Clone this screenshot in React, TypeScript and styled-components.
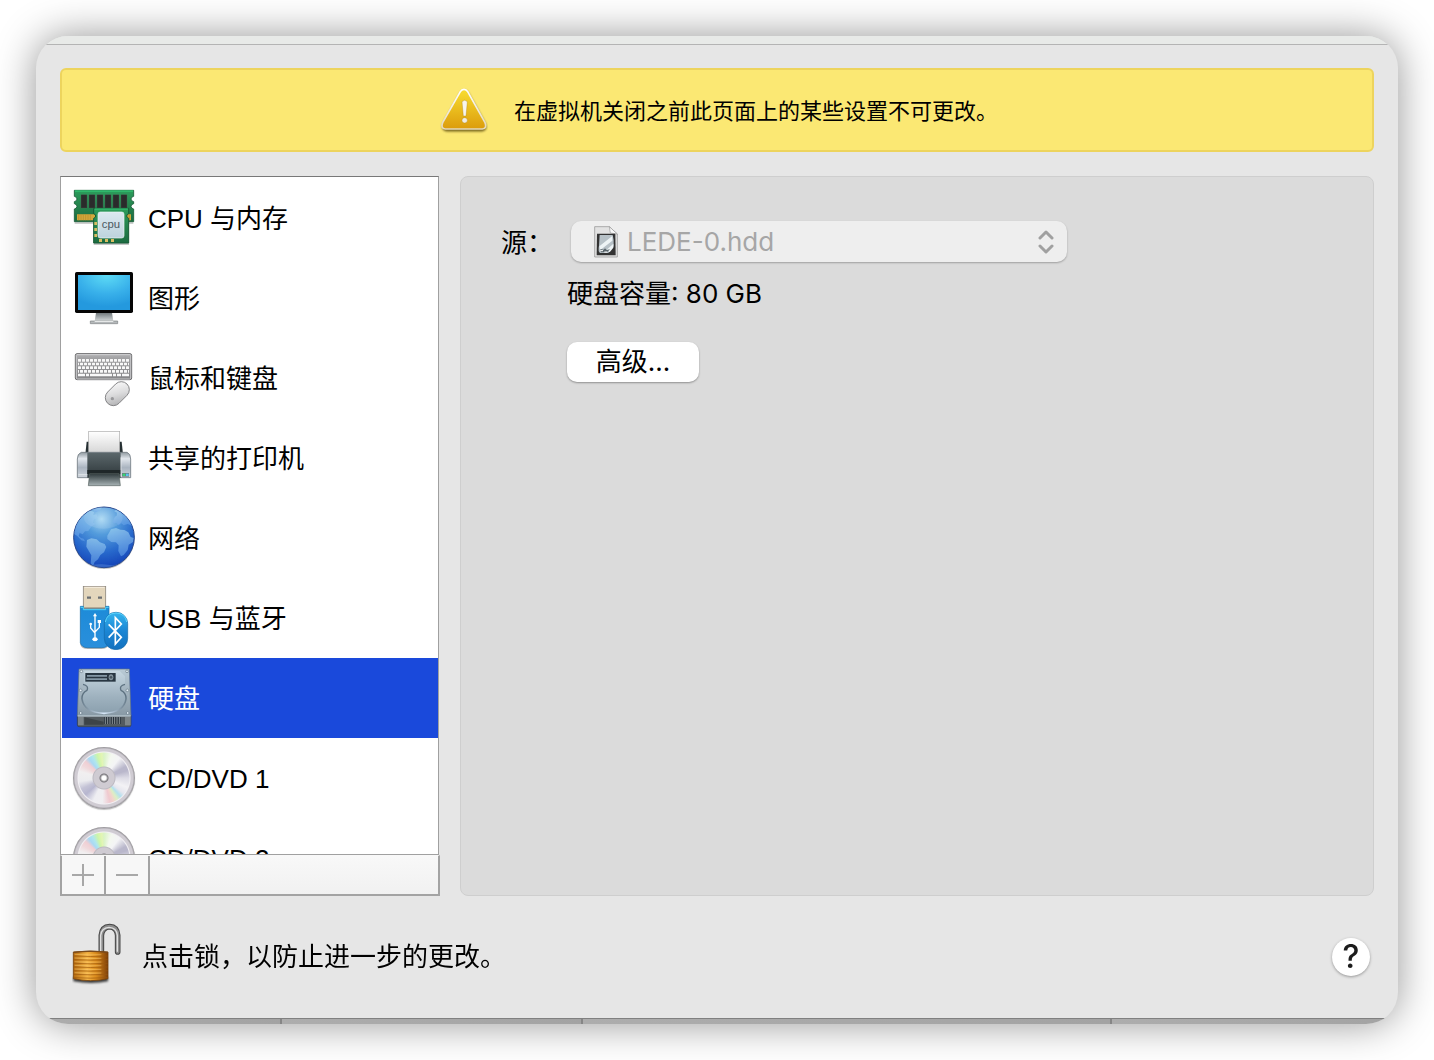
import React, { useState } from 'react';
import styled, { createGlobalStyle } from 'styled-components';

const sans = '"Liberation Sans", "Noto Sans CJK SC", sans-serif';
const ui = 'Inter, "Noto Sans CJK SC", sans-serif';

const GlobalStyle = createGlobalStyle`
  *, *::before, *::after { box-sizing: border-box; }
  body { margin: 0; background: #fff; color: #000; font-family: ${ui}; font-size: 26px; }
  button, select { font: inherit; color: inherit; }
`;

const Desktop = styled.div`
  min-height: 100vh;
  padding: 36px;
  display: flex;
`;

const Window = styled.main`
  flex: 1;
  min-width: 0;
  display: flex;
  flex-direction: column;
  overflow: hidden;
  border-radius: 32px;
  background: #e6e6e6;
  box-shadow: 0 0 40px rgba(0, 0, 0, 0.42);
`;

const TitleEdge = styled.div`
  height: 9px;
  background: #e8eae8;
  border-bottom: 1px solid #b4b4b4;
`;

const Content = styled.div`
  flex: 1;
  display: flex;
  flex-direction: column;
  padding: 23px 24px 0;
`;

const Banner = styled.div`
  display: flex;
  align-items: center;
  justify-content: center;
  gap: 26px;
  height: 84px;
  padding-left: 4px;
  border: 2px solid #edd45d;
  border-radius: 6px;
  background: #fbe873;
  font-size: 22px;
  line-height: 32px;
`;

const Caption = styled.span`
  padding-top: 2px;
`;

const Columns = styled.div`
  display: flex;
  gap: 20px;
  margin-top: 24px;
`;

const Sidebar = styled.aside`
  flex: none;
  width: 380px;
`;

const DeviceList = styled.ul`
  list-style: none;
  height: 679px;
  margin: 0 1px 0 0;
  padding: 1px 0 0 1px;
  overflow-y: auto;
  scrollbar-width: none;
  border: 1px solid #a0a0a0;
  border-top-color: #787878;
  background: #fff;
`;

const DeviceButton = styled.button<{ $active: boolean }>`
  display: flex;
  align-items: center;
  gap: 12px;
  width: 100%;
  height: 80px;
  padding: 0 10px;
  border: 0;
  background: ${(p) => (p.$active ? '#1a49db' : 'transparent')};
  color: ${(p) => (p.$active ? '#fff' : '#000')};
  font-family: ${sans};
  font-size: 26px;
  line-height: 32px;
  text-align: left;
`;

const Toolbar = styled.div`
  display: flex;
  height: 41px;
  border: 2px solid #a3a3a3;
  border-top: 1px solid #f8f8f8;
  background: linear-gradient(#f8f8f8, #f1f1f1);
`;

const ToolButton = styled.button`
  display: grid;
  place-items: center;
  width: 44px;
  padding: 0;
  border: 0;
  border-right: 2px solid #a3a3a3;
  background: #f7f7f7;
`;

const Panel = styled.section`
  flex: 1;
  min-width: 0;
  padding: 44px 40px;
  border: 1px solid #cecece;
  border-radius: 8px;
  background: #dbdbdb;
`;

const Form = styled.div`
  display: grid;
  grid-template-columns: auto minmax(0, 1fr);
  column-gap: 14px;
  row-gap: 16px;
  line-height: 32px;
`;

const FieldLabel = styled.label`
  align-self: center;
  padding-top: 2px;
`;

const Picker = styled.div`
  position: relative;
  max-width: 496px;
  margin-left: 4px;
`;

const PickerSelect = styled.select`
  appearance: none;
  display: block;
  width: 100%;
  height: 41px;
  padding: 0 56px;
  border: 0;
  border-radius: 10px;
  background: #eee;
  box-shadow: 0 1px 2px rgba(0, 0, 0, 0.28);
  font-size: 26px;
  line-height: 32px;
  &:disabled { color: #a6a6a6; opacity: 1; }
`;

const PickerIcon = styled.span<{ $side: 'left' | 'right' }>`
  position: absolute;
  top: 0;
  bottom: 0;
  ${(p) => p.$side}: ${(p) => (p.$side === 'left' ? 23 : 13)}px;
  display: flex;
  align-items: center;
  pointer-events: none;
`;

const FormBody = styled.div`
  grid-column: 2;
`;

const PushButton = styled.button`
  height: 40px;
  min-width: 132px;
  margin-top: 16px;
  padding: 0 28px;
  border: 0;
  border-radius: 10px;
  background: #fff;
  box-shadow: 0 1px 2px rgba(0, 0, 0, 0.35);
  line-height: 32px;
`;

const Footer = styled.footer`
  flex: 1;
  display: flex;
  align-items: center;
  gap: 20px;
  min-height: 122px;
  padding: 0 4px 0 12px;
`;

const LockButton = styled.button`
  display: flex;
  padding: 0 0 4px;
  border: 0;
  background: none;
`;

const LockText = styled.span`
  flex: 1;
  line-height: 32px;
`;

const HelpButton = styled.button`
  width: 38px;
  height: 38px;
  padding: 0;
  border: 0;
  border-radius: 50%;
  background: #fff;
  box-shadow: 0 1px 3px rgba(0, 0, 0, 0.35);
  color: #1c1c1c;
  font-size: 32px;
  font-weight: 500;
  line-height: 38px;
`;

const BottomEdge = styled.div`
  display: flex;
  height: 6px;
  border-top: 1px solid #808080;
  background: #a6a6a6;
`;

const EdgeSegment = styled.div<{ $grow: number }>`
  flex: ${(p) => p.$grow} 1 0;
  border-right: 2px solid #868686;
  background: linear-gradient(90deg, #adadad, #a3a3a3);
  &:last-child { border-right: 0; }
`;

const Disc = styled.span`
  flex: none;
  width: 62px;
  height: 62px;
  margin: 1px;
  border-radius: 50%;
  box-shadow: 0 1px 1px rgba(0, 0, 0, 0.25);
  background:
    radial-gradient(circle, #fff 0 2px, #77757a 4px, #cfcbd2 5px, #cfcbd2 10px, #bdbac2 11px, transparent 12px, transparent 25px, #f2f0f4 26px, #d0ccd3 27px, #d0ccd3 29px, #8e8c90 31px),
    conic-gradient(#d9f3c4, #f4f8f0 18deg, #f4f4f6 38deg, #b9b7cb 62deg, #b9b7cb 72deg, #dddce6 90deg, #f3f2f5 112deg, #e6e6ee 128deg, #b4e0ee 138deg, #dcefc4 148deg, #f3d3cd 158deg, #efc9cf 166deg, #f0eff2 184deg, #eeeef2 205deg, #b7b6cf 228deg, #c4c3d6 244deg, #ececef 262deg, #f1eff0 285deg, #f0d9dc 300deg, #f0cfd4 312deg, #a9d9f4 322deg, #b0e6ee 332deg, #cdf5a9 344deg, #e3f5b4 354deg, #d9f3c4);
`;

const DeviceSvg = styled.svg`
  flex: none;
  width: 64px;
  height: 64px;
`;

const CpuIcon = () => (
  <DeviceSvg viewBox="36 33 192 192" aria-hidden="true">
    <defs>
      <linearGradient id="board" x1="0" y1="0" x2="0" y2="1"><stop offset="0" stopColor="#2c9c5b" /><stop offset="1" stopColor="#1c6b40" /></linearGradient>
      <linearGradient id="chip" x1="0" y1="0" x2="0" y2="1"><stop offset="0" stopColor="#dce9f0" /><stop offset="1" stopColor="#bdd3dd" /></linearGradient>
    </defs>
    <path d="M44 142h176v4H44z" fill="#000" opacity=".25" />
    <path d="M43 46h178v18q-8 2-8 8t8 8v6q-8 2-8 8t8 8v38H43v-38q8-2 8-8t-8-8v-6q8-2 8-8t-8-8z" fill="url(#board)" stroke="#175b36" strokeWidth="2.5" />
    <path d="M45 48h174" stroke="#35d47c" strokeWidth="3" />
    <g fill="#2a2b2b" stroke="#555c58" strokeWidth="1">
      {[63, 87, 111, 135, 159, 183].map((x) => <rect key={x} x={x} y="59" width="18" height="40" rx="1" />)}
    </g>
    <path d="M51 118h162v18H51z" fill="#d2a83c" />
    <path d="M56 118v18m7-18v18m7-18v18m7-18v18m7-18v18m7-18v18m110-18v18m7-18v18" stroke="#b78a28" strokeWidth="2" />
    <path d="M101 205h106v4H101z" fill="#000" opacity=".3" />
    <path d="M101 100h105v16q-6 2-6 7t6 7v74H101v-74q6-2 6-7t-6-7z" fill="url(#board)" stroke="#175b36" strokeWidth="3" />
    <path d="M104 102h100" stroke="#35c877" strokeWidth="3" />
    <rect x="114" y="111" width="78" height="78" rx="7" fill="url(#chip)" stroke="#f0f6f8" strokeWidth="2" />
    <g fill="#d9bd62"><path d="M103 141h8v9h-8zM103 159h8v9h-8zM103 177h8v9h-8zM117 192h9v9h-9zM135 192h9v9h-9zM153 192h9v9h-9z" /></g>
    <text x="153" y="159" textAnchor="middle" fontFamily="Liberation Sans, sans-serif" fontSize="34" fill="#4b5961">cpu</text>
  </DeviceSvg>
);

const DisplayIcon = () => (
  <DeviceSvg viewBox="36 273 192 192" aria-hidden="true">
    <defs>
      <radialGradient id="screen" cx=".55" cy="0" r=".9"><stop offset="0" stopColor="#5edcf6" /><stop offset=".6" stopColor="#38b0ea" /><stop offset="1" stopColor="#2499de" /></radialGradient>
      <linearGradient id="stand" x1="0" y1="0" x2="0" y2="1"><stop offset="0" stopColor="#6f7679" /><stop offset=".5" stopColor="#a3aaad" /><stop offset="1" stopColor="#d8dbdc" /></linearGradient>
    </defs>
    <path d="M108 413h48l4 26h-56z" fill="url(#stand)" />
    <path d="M91 438h82v8H91z" fill="#b5b9bb" stroke="#7a7e80" strokeWidth="2" />
    <path d="M104 439h56" stroke="#f4f6f6" strokeWidth="3" />
    <rect x="45" y="291" width="174" height="123" rx="5" fill="#050505" />
    <rect x="54" y="300" width="156" height="105" fill="url(#screen)" />
  </DeviceSvg>
);

const KeyboardIcon = () => (
  <DeviceSvg viewBox="36 18 192 192" aria-hidden="true">
    <defs>
      <linearGradient id="kbd" x1="0" y1="0" x2="0" y2="1"><stop offset="0" stopColor="#b4b4b6" /><stop offset=".2" stopColor="#a0a0a2" /><stop offset="1" stopColor="#868688" /></linearGradient>
      <linearGradient id="mouse" x1="0" y1="0" x2="1" y2="1"><stop offset="0" stopColor="#fdfdfd" /><stop offset=".5" stopColor="#dcdcdd" /><stop offset="1" stopColor="#a9a9ab" /></linearGradient>
    </defs>
    <rect x="46" y="41" width="169" height="78" rx="5" fill="url(#kbd)" stroke="#6a6a6c" strokeWidth="3" />
    <path d="M50 44h161" stroke="#e9e9ea" strokeWidth="2" />
    <path d="M49 46v68q0 3 3 3h157q3 0 3-3V46" fill="none" stroke="#c8c8ca" strokeWidth="3" />
    <g fill="#f8f8f8">
      {[0, 1, 2, 3].map((r) => Array.from({ length: r % 2 ? 12 : 13 }, (_, c) => (
        <rect key={`${r}-${c}`} x={54 + (r % 2) * 6 + c * 12} y={57 + r * 11} width="9" height="8" rx="1" />
      )))}
      <path d="M54 68h3v8h-3zM204 68h3v8h-3zM54 90h3v8h-3zM204 90h3v8h-3z" />
      <rect x="54" y="101" width="21" height="8" rx="1" /><rect x="78" y="101" width="9" height="8" rx="1" />
      <rect x="90" y="101" width="66" height="8" rx="1" /><rect x="159" y="101" width="9" height="8" rx="1" />
      <rect x="171" y="101" width="12" height="8" rx="1" /><rect x="186" y="101" width="21" height="8" rx="1" />
    </g>
    <rect x="148" y="120" width="48" height="82" rx="24" transform="rotate(45 172 161)" fill="url(#mouse)" stroke="#767678" strokeWidth="2.5" />
    <circle cx="157" cy="176" r="5" fill="#98989a" />
  </DeviceSvg>
);

const PrinterIcon = () => (
  <DeviceSvg viewBox="36 258 192 192" aria-hidden="true">
    <defs>
      <linearGradient id="paper" x1="0" y1="0" x2="0" y2="1"><stop offset="0" stopColor="#fff" /><stop offset="1" stopColor="#d4d4d4" /></linearGradient>
      <linearGradient id="shell" x1="0" y1="0" x2="0" y2="1"><stop offset="0" stopColor="#8f999f" /><stop offset=".25" stopColor="#e1e6ec" /><stop offset=".6" stopColor="#aab4c0" /><stop offset="1" stopColor="#cfd5dc" /></linearGradient>
      <linearGradient id="front" x1="0" y1="0" x2="0" y2="1"><stop offset="0" stopColor="#5b676b" /><stop offset="1" stopColor="#2d3639" /></linearGradient>
      <linearGradient id="tray" x1="0" y1="0" x2="0" y2="1"><stop offset="0" stopColor="#2f3a3d" /><stop offset="1" stopColor="#a8b3b5" /></linearGradient>
    </defs>
    <path d="M80 305h105l4 38H76z" fill="#263033" />
    <rect x="86" y="274" width="93" height="68" fill="url(#paper)" stroke="#ababab" strokeWidth="2" />
    <path d="M64 337h137q11 4 11 20v56H52v-56q0-16 12-20z" fill="url(#shell)" stroke="#717b82" strokeWidth="2.5" />
    <path d="M82 338h100v75H82z" fill="url(#front)" />
    <path d="M82 390h100v12H82z" fill="#1f2729" />
    <path d="M89 401h88l4 36H85z" fill="url(#tray)" stroke="#56625f" strokeWidth="2" />
    <path d="M55 404h27M183 352v58" stroke="#eef1f4" strokeWidth="2" />
    <rect x="186" y="399" width="21" height="11" fill="#6d7c82" />
    <path d="M188 401h8v7h-8z" fill="#36d673" /><path d="M198 401h8v7h-8z" fill="#5bc2ee" />
  </DeviceSvg>
);

const GlobeIcon = () => (
  <DeviceSvg viewBox="36 24 192 192" aria-hidden="true">
    <defs>
      <radialGradient id="ocean" cx=".46" cy=".2" r=".85"><stop offset="0" stopColor="#a9d8f3" /><stop offset=".3" stopColor="#549cdc" /><stop offset=".65" stopColor="#2869cc" /><stop offset="1" stopColor="#123db4" /></radialGradient>
      <linearGradient id="land" x1="0" y1="0" x2="0" y2="1"><stop offset="0" stopColor="#a5d5f2" /><stop offset="1" stopColor="#5e9ce8" /></linearGradient>
      <clipPath id="globe"><circle cx="132" cy="118" r="90" /></clipPath>
    </defs>
    <circle cx="132" cy="121" r="92" fill="#000" opacity=".25" />
    <circle cx="132" cy="118" r="91" fill="url(#ocean)" stroke="#27488f" strokeWidth="3" />
    <g clipPath="url(#globe)" fill="url(#land)" opacity=".62">
      <path d="M42 108l3-30 24-30 20-11 13 5-2 9 9-2 5 12-12 3-3 10 7 4-12 8-9 13-10 1-7 9-9-4-3 9 7 6 8 2 4 8-11-3-13-14z" />
      <path d="M81 126l13-5 16 3 10 9 14 5 5 9-7 16-11 8-7 13-10 8-5 12-7-8 2-24-8-14-7-12z" />
      <path d="M96 32l14-6 16 2-6 9-13 6z" />
      <path d="M160 66l5-10 5-3 1-9-8-4 9-7 11 5 18 12 16 26 3 9-17-7-12 4-7-6-8 6-7-8-9 2z" />
      <path d="M142 113l11-19 15-4 13 5 12 1 12 7 7 14 9 3-2 12-13 8-3 16-12 15-8 4-8-16 1-17-8-9-14-1-12-9z" />
      <path d="M76 204l20-4 29-1 33 3 24-5-17 18H98z" opacity=".4" />
    </g>
    <ellipse cx="130" cy="60" rx="58" ry="32" fill="#fff" opacity=".1" />
  </DeviceSvg>
);

const UsbIcon = () => (
  <DeviceSvg viewBox="36 264 192 192" aria-hidden="true">
    <defs>
      <linearGradient id="usb" x1="0" y1="0" x2="0" y2="1"><stop offset="0" stopColor="#1d8bd8" /><stop offset="1" stopColor="#2a8fdc" /></linearGradient>
      <linearGradient id="bt" x1="0" y1="0" x2="0" y2="1"><stop offset="0" stopColor="#35b4ee" /><stop offset=".5" stopColor="#1b86d4" /><stop offset="1" stopColor="#1371bf" /></linearGradient>
    </defs>
    <rect x="70" y="265" width="67" height="70" fill="#e3d6bc" stroke="#8c877d" strokeWidth="2.5" />
    <path d="M73 268h61" stroke="#f5edde" strokeWidth="3" />
    <path d="M81 294h12v8H81zM114 294h12v8h-12z" fill="#6b6f72" /><path d="M81 294h12v3H81zM114 294h12v3h-12z" fill="#a6a49c" />
    <path d="M61 325h86v112q-6 13-22 13H83q-18 0-22-13z" fill="#111" opacity=".3" transform="translate(0 3)" />
    <path d="M61 325h9v8h67v-8h10v109q-4 15-22 15H83q-18 0-22-15z" fill="url(#usb)" stroke="#186fae" strokeWidth="2" />
    <path d="M62 328h8v7h67v-7h9" fill="none" stroke="#54d6fa" strokeWidth="3" />
    <g stroke="#fff" strokeWidth="4" fill="none"><path d="M105 352v72M92 379v11l13 15M118 370v18l-13 14" /></g>
    <path d="M105 345l6 10H99z" fill="#fff" /><circle cx="92" cy="378" r="4" fill="#fff" /><path d="M113 366h10v9h-10z" fill="#fff" /><ellipse cx="105" cy="424" rx="8" ry="6" fill="#fff" />
    <rect x="133" y="343" width="70" height="112" rx="34" fill="url(#bt)" stroke="#1468a8" strokeWidth="2" />
    <path d="M136 372q4-26 32-27 28 1 32 27" fill="none" stroke="#5bd3fa" strokeWidth="3" />
    <path d="M146 379l38 39-18 20v-79l18 19-38 41" fill="none" stroke="#fff" strokeWidth="5" />
  </DeviceSvg>
);

const HardDiskIcon = () => (
  <DeviceSvg viewBox="36 33 192 192" aria-hidden="true">
    <defs>
      <linearGradient id="plate" x1="0" y1="0" x2="0" y2="1"><stop offset="0" stopColor="#b9cad5" /><stop offset="1" stopColor="#8899a5" /></linearGradient>
      <linearGradient id="cover" x1="0" y1="0" x2="0" y2="1"><stop offset="0" stopColor="#c6d6e0" /><stop offset=".6" stopColor="#9fb2bf" /><stop offset="1" stopColor="#8ba0ae" /></linearGradient>
      <linearGradient id="rim" x1="0" y1="0" x2="1" y2="0"><stop offset="0" stopColor="#6a7e8d" /><stop offset=".5" stopColor="#d6e7f8" /><stop offset="1" stopColor="#6a7e8d" /></linearGradient>
    </defs>
    <path d="M52 180h161v30q0 5-5 5H57q-5 0-5-5z" fill="#535b60" stroke="#36434b" strokeWidth="2" />
    <path d="M57 42h151l5 141H52z" fill="url(#plate)" stroke="#5f7381" strokeWidth="2" />
    <path d="M53 183h159" stroke="#d5e2e9" strokeWidth="3" />
    <path d="M73 48h106l16 16v24q-18 4-12 18 16 8 15 26-6 40-66 43-60-3-66-43-1-18 15-26 6-14-10-18z" fill="url(#cover)" />
    <path d="M69 88q18 4 12 18-16 8-15 26" fill="none" stroke="#5d7180" strokeWidth="4" />
    <path d="M195 88q-18 4-12 18 16 8 15 26" fill="none" stroke="#5d7180" strokeWidth="4" />
    <path d="M66 132q6 40 66 43 60-3 66-43" fill="none" stroke="url(#rim)" strokeWidth="5" />
    <path d="M76 54h91v26H76z" fill="#283642" />
    <path d="M81 60h60v5H81zM79 70h62v5H79z" fill="#8498a6" /><ellipse cx="153" cy="67" rx="7" ry="9" fill="#82929d" /><circle cx="153" cy="67" r="4" fill="#46545f" />
    <g fill="#e3edf4" stroke="#667986" strokeWidth="2"><circle cx="64" cy="49" r="4" /><circle cx="201" cy="49" r="4" /><circle cx="62" cy="106" r="4" /><circle cx="202" cy="106" r="4" /><circle cx="62" cy="174" r="4" /><circle cx="203" cy="174" r="4" /></g>
    <path d="M54 186h17v25H54zM195 186h17v25h-17z" fill="#7d8589" />
    <path d="M73 187l58 13v9H73z" fill="#3d4448" />
    <path d="M132 186h50v21h-50z" fill="#26303a" /><path d="M136 186v21m7-21v21m7-21v21m7-21v21m7-21v21m7-21v21m7-21v21" stroke="#8a9296" strokeWidth="3" />
  </DeviceSvg>
);

const WarningIcon = () => (
  <svg width="48" height="48" viewBox="1320 256 144 144" aria-hidden="true">
    <defs>
      <linearGradient id="warn" x1="0" y1="0" x2="0" y2="1"><stop offset="0" stopColor="#f8dd31" /><stop offset="1" stopColor="#dc9c0b" /></linearGradient>
      <linearGradient id="warnRim" x1="0" y1="0" x2="0" y2="1"><stop offset="0" stopColor="#fff" /><stop offset="1" stopColor="#e4d8ba" /></linearGradient>
      <filter id="soft" x="-20%" y="-20%" width="140%" height="150%"><feGaussianBlur stdDeviation="3" /></filter>
    </defs>
    <path d="M1393 270q7 0 11 7l52 92q7 20-10 22h-106q-17-2-10-22l52-92q4-7 11-7z" fill="#4c3900" stroke="#4c3900" strokeWidth="3" opacity=".75" filter="url(#soft)" />
    <path d="M1392 266q7 0 11 7l52 93q7 17-8 19h-111q-15-2-8-19l53-93q4-7 11-7z" fill="url(#warn)" stroke="url(#warnRim)" strokeWidth="5" />
    <path d="M1386 303q8-9 16 0l-4 43h-8z" fill="#f7f5ee" stroke="#a87b10" strokeWidth="1" /><circle cx="1394" cy="359" r="8" fill="#f0ede4" stroke="#a87b10" strokeWidth="1" />
  </svg>
);

const FileIcon = () => (
  <svg width="24" height="32" viewBox="402 71 72 96" aria-hidden="true">
    <path d="M404 73h44l24 22v69h-68z" fill="#e2e2e2" stroke="#8b8b8b" strokeWidth="2" />
    <path d="M448 73l3 19 21 3z" fill="#fafafa" stroke="#999" strokeWidth="2" />
    <path d="M411 94h55l1 65h-57z" fill="#333" />
    <path d="M419 98h39q5 16 3 34l-16 20h-24q-8-4-4-22z" fill="#b7c1c7" />
    <path d="M418 132l39-31v14l-37 29zM440 142l20-18v12l-11 14z" fill="#eef4f6" />
    <path d="M421 140l10 2 4-4 5 5 10-2-8 8-19 1z" fill="#59646a" /><path d="M421 145h8m4 4h9" stroke="#fff" strokeWidth="3" />
  </svg>
);

const LockIcon = () => (
  <svg width="50" height="64" viewBox="66 321 150 192" aria-hidden="true">
    <defs>
      <linearGradient id="brass" x1="0" y1="0" x2="1" y2="0"><stop offset="0" stopColor="#b3680c" /><stop offset=".4" stopColor="#f5b445" /><stop offset=".65" stopColor="#dc8c1c" /><stop offset="1" stopColor="#7e3f08" /></linearGradient>
      <filter id="lockShade" x="-20%" y="-60%" width="140%" height="220%"><feGaussianBlur stdDeviation="3" /></filter>
    </defs>
    <path d="M70 484h104v12q-50 10-104 0z" fill="#000" opacity=".75" filter="url(#lockShade)" />
    <path d="M154 410v-52q2-25 25-26 22 1 24 26v50" fill="none" stroke="#464646" strokeWidth="17" strokeLinecap="round" />
    <path d="M154 410v-52q2-25 25-26 22 1 24 26v50" fill="none" stroke="#8d8d8d" strokeWidth="11" strokeLinecap="round" />
    <path d="M152 405v-47q2-22 25-24 23 1 25 24v48" fill="none" stroke="#e0e0e0" strokeWidth="4" strokeLinecap="round" />
    <path d="M70 408q50-6 104 0v80q-52 12-104 0z" fill="url(#brass)" stroke="#75420e" strokeWidth="2.5" />
    <path d="M71 409q50-6 102 0" stroke="#7a4a1c" strokeWidth="4" fill="none" />
    {[420, 431, 442, 453, 464, 475, 485].map((y) => <path key={y} d={`M71 ${y}q50 3 102 0`} stroke="#9a560c" strokeWidth="3" opacity=".65" fill="none" />)}
    {[415, 426, 437, 448, 459, 470].map((y) => <path key={y} d={`M74 ${y}q44 3 80 1`} stroke="#ffd681" strokeWidth="2" opacity=".65" fill="none" />)}
  </svg>
);

const devices = [
  { label: 'CPU 与内存', Icon: CpuIcon },
  { label: '图形', Icon: DisplayIcon },
  { label: '鼠标和键盘', Icon: KeyboardIcon },
  { label: '共享的打印机', Icon: PrinterIcon },
  { label: '网络', Icon: GlobeIcon },
  { label: 'USB 与蓝牙', Icon: UsbIcon },
  { label: '硬盘', Icon: HardDiskIcon },
  { label: 'CD/DVD 1', Icon: Disc },
  { label: 'CD/DVD 2', Icon: Disc },
];

export default function App() {
  const [selected, setSelected] = useState(6);
  return (
    <Desktop>
      <GlobalStyle />
      <Window>
        <TitleEdge />
        <Content>
          <Banner role="status">
            <WarningIcon />
            <Caption>在虚拟机关闭之前此页面上的某些设置不可更改。</Caption>
          </Banner>
          <Columns>
            <Sidebar>
              <DeviceList>
                {devices.map(({ label, Icon }, i) => (
                  <li key={label}>
                    <DeviceButton type="button" $active={i === selected} onClick={() => setSelected(i)}>
                      <Icon />
                      <Caption>{label}</Caption>
                    </DeviceButton>
                  </li>
                ))}
              </DeviceList>
              <Toolbar>
                <ToolButton type="button" aria-label="添加" disabled>
                  <svg width="22" height="22" viewBox="0 0 22 22"><path d="M0 11h22M11 0v22" stroke="#a8a8a8" strokeWidth="2" /></svg>
                </ToolButton>
                <ToolButton type="button" aria-label="移除" disabled>
                  <svg width="22" height="22" viewBox="0 0 22 22"><path d="M0 11h22" stroke="#a8a8a8" strokeWidth="2" /></svg>
                </ToolButton>
              </Toolbar>
            </Sidebar>
            <Panel>
              <Form>
                <FieldLabel htmlFor="source">源：</FieldLabel>
                <Picker>
                  <PickerSelect id="source" disabled defaultValue="LEDE-0.hdd">
                    <option>LEDE-0.hdd</option>
                  </PickerSelect>
                  <PickerIcon $side="left"><FileIcon /></PickerIcon>
                  <PickerIcon $side="right">
                    <svg width="16" height="24" viewBox="0 0 16 24" fill="none" stroke="#a0a0a0" strokeWidth="3" strokeLinecap="round" strokeLinejoin="round"><path d="M2 8l6-6 6 6M2 16l6 6 6-6" /></svg>
                  </PickerIcon>
                </Picker>
                <FormBody>硬盘容量: 80 GB</FormBody>
                <FormBody><PushButton type="button">高级...</PushButton></FormBody>
              </Form>
            </Panel>
          </Columns>
          <Footer>
            <LockButton type="button" aria-label="锁定"><LockIcon /></LockButton>
            <LockText>点击锁，以防止进一步的更改。</LockText>
            <HelpButton type="button" aria-label="帮助">?</HelpButton>
          </Footer>
        </Content>
        <BottomEdge>
          <EdgeSegment $grow={245} />
          <EdgeSegment $grow={300} />
          <EdgeSegment $grow={530} />
          <EdgeSegment $grow={287} />
        </BottomEdge>
      </Window>
    </Desktop>
  );
}
